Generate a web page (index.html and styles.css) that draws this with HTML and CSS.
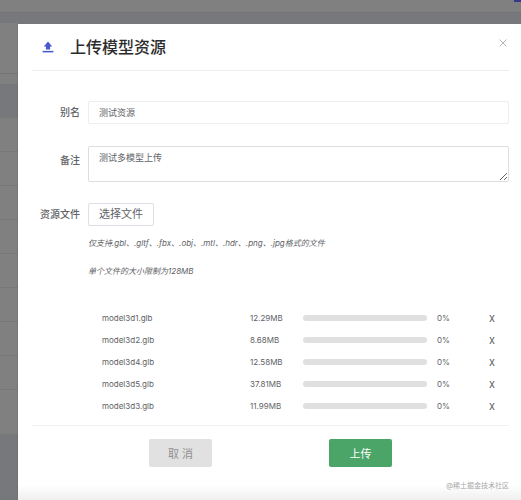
FILE: index.html
```
<!DOCTYPE html>
<html lang="zh-CN">
  <head>
    <meta charset="UTF-8" />
    <meta name="viewport" content="width=device-width, initial-scale=1.0" />
    <title>上传模型资源</title>
    <link rel="stylesheet" href="styles.css">
  </head>

  <body>
    <!-- Dimmed page behind the dialog -->
    <div class="page">
      <div class="page-top"><span class="page-action"></span></div>
      <div class="page-filter"></div>
      <div class="page-list">
        <div class="page-row page-row-head"></div>
        <div class="page-row"></div>
        <div class="page-row"></div>
        <div class="page-row"></div>
        <div class="page-row"></div>
        <div class="page-row"></div>
        <div class="page-row"></div>
        <div class="page-row"></div>
        <div class="page-row"></div>
        <div class="page-row page-row-last"></div>
      </div>
    </div>

    <div class="dialog" role="dialog" aria-labelledby="dialog-title">
      <header class="dialog-header">
        <svg class="upload-icon" viewBox="0 0 20 20" aria-hidden="true">
          <path d="M10 1 L17 9 H13.5 V14 H6.5 V9 H3 Z" />
          <rect x="1" y="16.5" width="18" height="2.5" />
        </svg>
        <h1 id="dialog-title">上传模型资源</h1>
        <button class="close-button" type="button" aria-label="关闭">
          <svg viewBox="0 0 8 8" aria-hidden="true">
            <path d="M0.5 0.5 L7.5 7.5 M7.5 0.5 L0.5 7.5" />
          </svg>
        </button>
      </header>

      <form class="upload-form">
        <div class="field">
          <label for="alias">别名</label>
          <input id="alias" class="text-box" type="text" value="测试资源" />
        </div>
        <div class="field field-remark">
          <label for="remark">备注</label>
          <textarea id="remark" class="text-box">测试多模型上传</textarea>
        </div>
        <div class="field field-file">
          <label for="choose">资源文件</label>
          <button id="choose" class="choose-button" type="button">选择文件</button>
        </div>
        <div class="hints">
          <p>仅支持.gbl、.gltf、.fbx、.obj、.mtl、.hdr、.png、.jpg格式的文件</p>
          <p>单个文件的大小限制为128MB</p>
        </div>

        <ul class="file-list">
          <li>
            <span>model3d1.glb</span>
            <span>12.29MB</span>
            <span class="bar"></span>
            <span>0%</span>
            <button class="remove-button" type="button">x</button>
          </li>
          <li>
            <span>model3d2.glb</span>
            <span>8.68MB</span>
            <span class="bar"></span>
            <span>0%</span>
            <button class="remove-button" type="button">x</button>
          </li>
          <li>
            <span>model3d4.glb</span>
            <span>12.58MB</span>
            <span class="bar"></span>
            <span>0%</span>
            <button class="remove-button" type="button">x</button>
          </li>
          <li>
            <span>model3d5.glb</span>
            <span>37.81MB</span>
            <span class="bar"></span>
            <span>0%</span>
            <button class="remove-button" type="button">x</button>
          </li>
          <li>
            <span>model3d3.glb</span>
            <span>11.99MB</span>
            <span class="bar"></span>
            <span>0%</span>
            <button class="remove-button" type="button">x</button>
          </li>
        </ul>

        <div class="actions">
          <button class="cancel-button" type="button">取 消</button>
          <button class="submit-button" type="submit">上传</button>
        </div>
      </form>

      <footer class="dialog-footer">@稀土掘金技术社区</footer>
    </div>
  </body>
</html>
```
FILE: styles.css
```
* {
  box-sizing: border-box;
}

body {
  margin: 0;
  min-height: 100vh;
  position: relative;
  overflow: hidden;
  background: #77787c;
  color: #606266;
  font-family: Inter, "Noto Sans CJK SC", sans-serif;
  font-size: 8px;
}

button,
input,
textarea {
  font-family: inherit;
  color: inherit;
}

/* Page under the dialog */
.page-top {
  display: flex;
  justify-content: flex-end;
  height: 13px;
  margin-bottom: 10px;
  background: #808080;
  border-bottom: 1px solid #737376;
}
.page-action {
  width: 7px;
  height: 2px;
  background: #36398a;
}
.page-filter {
  height: 51px;
  background: #808080;
  border-bottom: 1px solid #757577;
}
.page-list {
  padding-top: 10px;
  background: #808080;
}
.page-row {
  height: 34px;
  border-bottom: 1px solid #787878;
}
.page-row-head {
  background: #77787c;
}
.page-row-last {
  height: 45px;
}

/* Dialog */
.dialog {
  position: absolute;
  top: 24px;
  left: 18px;
  right: 0;
  min-height: calc(100% - 24px);
  display: flex;
  flex-direction: column;
  padding: 0 12px 0 14px;
  background: linear-gradient(to top, #ececec, #fff 18px);
  box-shadow: 0 0 1px rgba(0, 0, 0, 0.4);
}
.dialog-header {
  display: flex;
  align-items: center;
  height: 47px;
  border-bottom: 1px solid #ededed;
}
.upload-icon {
  width: 12px;
  height: 12px;
  margin: 0 16px 0 10px;
  fill: #4a58cf;
}
.dialog-header h1 {
  flex: 1;
  margin: 0;
  padding-bottom: 2px;
  color: #2c2c2c;
  font-size: 16px;
  font-weight: 500;
}
.close-button {
  align-self: flex-start;
  margin-top: 15px;
  padding: 0 2px;
  border: none;
  background: none;
  line-height: 0;
  cursor: pointer;
}
.close-button svg {
  width: 8px;
  height: 8px;
  fill: none;
  stroke: #b4b4b4;
}

/* Form */
.upload-form {
  padding-top: 30px;
}
.field {
  display: flex;
  gap: 8px;
}
.field label {
  width: 48px;
  font-size: 10px;
  font-weight: 500;
  line-height: 23px;
  text-align: right;
  white-space: nowrap;
}
.text-box {
  flex: 1;
  min-width: 0;
  height: 23px;
  padding: 0 10px;
  border: 1px solid #ebedf0;
  border-radius: 2px;
  background: #fff;
  font-size: 9px;
}
textarea.text-box {
  height: 36px;
  padding: 4px 10px;
  border-color: #dcdfe2;
  line-height: 13px;
}
.field-remark {
  margin-top: 22px;
}
.field-remark label {
  line-height: 28px;
}
.field-file {
  margin-top: 21px;
}
.choose-button {
  height: 23px;
  padding: 0 10px;
  border: 1px solid #dcdfe6;
  border-radius: 2px;
  background: #fff;
  font-size: 11px;
  line-height: 21px;
  cursor: pointer;
}
.hints {
  padding: 9px 0 16px 56px;
  font-style: italic;
}
.hints p {
  margin: 0 0 12px;
  line-height: 16px;
}

/* Selected files */
.file-list {
  margin: 0;
  padding: 0 0 8px 70px;
  border-bottom: 1px solid #f0f0f0;
  list-style: none;
}
.file-list li {
  display: grid;
  grid-template-columns: 148px 53px 1fr 52px 20px;
  align-items: center;
  height: 22px;
}
.bar {
  height: 6px;
  margin-right: 10px;
  border-radius: 3px;
  background: #e0e0e0;
}
.remove-button {
  justify-self: start;
  padding: 0;
  border: none;
  background: none;
  font-size: 11px;
  line-height: 14px;
  cursor: pointer;
}

.actions {
  display: flex;
  justify-content: center;
  gap: 117px;
  padding: 13px 0;
}
.cancel-button,
.submit-button {
  width: 63px;
  height: 28px;
  border: none;
  border-radius: 2px;
  font-size: 11px;
  cursor: pointer;
}
.cancel-button {
  background: #e1e1e1;
  color: #909090;
}
.submit-button {
  background: #4ca568;
  color: #fff;
}
.dialog-footer {
  margin-top: auto;
  padding-bottom: 11px;
  color: #a8a8a8;
  font-size: 7px;
  line-height: 12px;
  text-align: right;
}
```
